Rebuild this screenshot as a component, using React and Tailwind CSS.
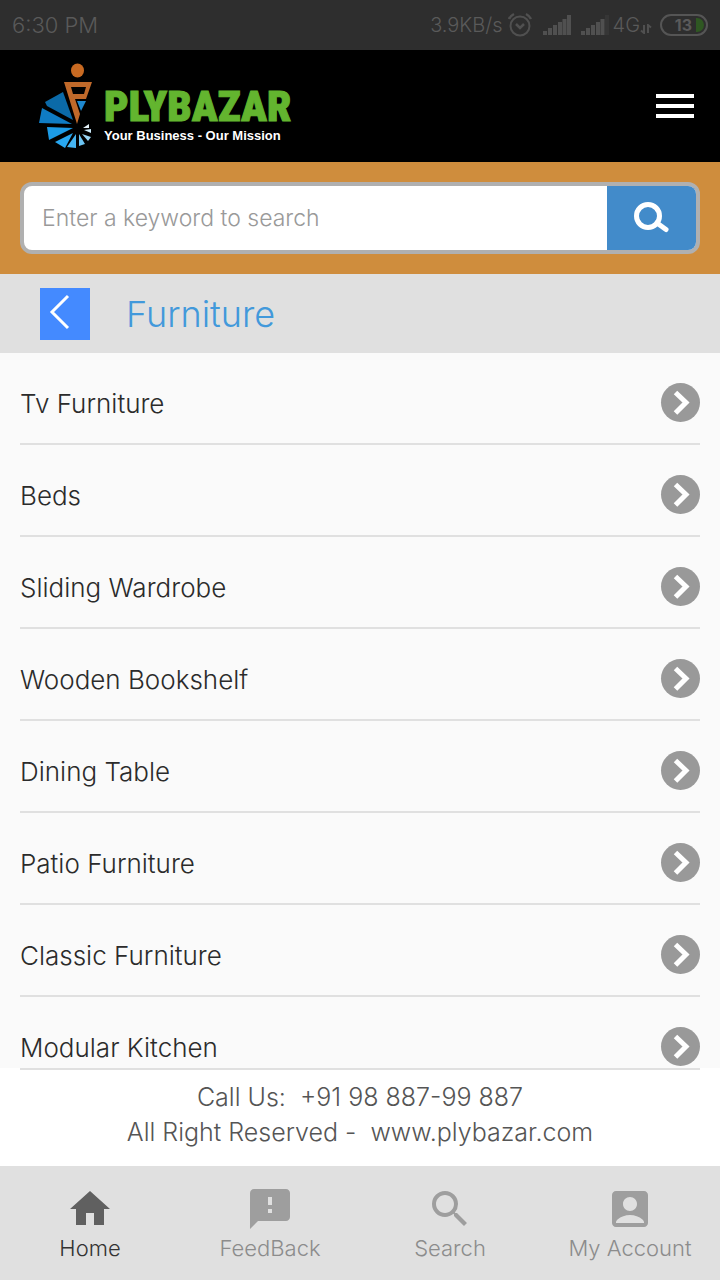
import React, { useState } from 'react';
import { MdHome, MdFeedback, MdSearch, MdAccountBox } from 'react-icons/md';

const categories = [
  'Tv Furniture',
  'Beds',
  'Sliding Wardrobe',
  'Wooden Bookshelf',
  'Dining Table',
  'Patio Furniture',
  'Classic Furniture',
  'Modular Kitchen',
];

const tabs = [
  { label: 'Home', icon: MdHome },
  { label: 'FeedBack', icon: MdFeedback },
  { label: 'Search', icon: MdSearch },
  { label: 'My Account', icon: MdAccountBox },
];

const Signal = ({ weakLast }) => (
  <svg width="28" height="20" viewBox="0 0 28 20" fill="#505050" aria-hidden="true">
    <rect x="0" y="16" width="4" height="4" />
    <rect x="5" y="13" width="4" height="7" />
    <rect x="10" y="10" width="4" height="10" />
    <rect x="15" y="7" width="4" height="13" />
    <rect x="19.500" y="4" width="4" height="16" />
    <rect x="24" y="0" width="4" height="20" opacity={weakLast ? 0.25 : 1} />
  </svg>
);

const StatusBar = () => (
  <div className="flex h-[50px] shrink-0 items-center justify-between bg-[#2e2e2e] px-3 text-[22px] font-light text-[#5a5a5a]">
    <span>6:30 PM</span>
    <div className="flex items-center">
      <span className="mr-1 text-xl">3.9KB/s</span>
      <svg className="mr-2.5" width="26" height="26" viewBox="0 0 26 26" fill="none" stroke="#505050" strokeWidth="2" aria-hidden="true">
        <circle cx="13" cy="14" r="9.5" />
        <path d="M9 12l4 4 4-4" strokeWidth="2.5" />
        <path d="M2 7c1-2.500 3-4 5-5M24 7c-1-2.500-3-4-5-5" strokeWidth="2.500" />
      </svg>
      <Signal />
      <span className="w-2.5" />
      <Signal weakLast />
      <span className="ml-1 text-xl">4G</span>
      <svg className="mt-2 mr-2" width="12" height="10" viewBox="0 0 12 10" fill="none" stroke="#505050" strokeWidth="2" aria-hidden="true">
        <path d="M4 1v8L1 6.500M8 9V1l3 2.500" />
      </svg>
      <div className="flex h-[22px] w-12 items-center justify-end overflow-hidden rounded-full border-2 border-[#555] text-base font-bold">
        <span className="mr-1">13</span>
        <span className="mr-0.5 h-3.5 w-2 rounded-r-full bg-[#2f5722]" />
      </div>
    </div>
  </div>
);

const LogoMark = () => (
  <svg width="56" height="90" viewBox="0 0 56 90" aria-hidden="true">
    <ellipse cx="38.500" cy="9.500" rx="6.500" ry="7" fill="#c86a22" />
    <path fillRule="evenodd" fill="#c0692a" d="M25 21h28L47 38H36l5 15-3 10zM32 26l2 7h11l2-7z" />
    <path d="M38 40h9l-5 10z" fill="#1e88cf" />
    <path d="M24 31L6 41l2 4 26 14z" fill="#0b6aa8" />
    <path d="M3 47L0 62l33 1z" fill="#0f7cc4" />
    <path d="M8 66l2 13 24-12z" fill="#1c9be6" />
    <path d="M16 81l10 6 8-15z" fill="#28a7f0" />
    <path d="M28 86l9 1V73z" fill="#45b4f2" />
    <path d="M40 73v12l6-2z" fill="#6cc4f3" />
    <path d="M43 73l6 7 3-4z" fill="#9ad6f6" />
    <path d="M45 69l7 3v-4z" fill="#c9e8f8" />
    <path d="M44 67h6v-4z" fill="#e6f3fa" />
  </svg>
);

const Header = () => (
  <header className="flex h-28 shrink-0 items-center justify-between bg-black pr-[26px] pl-[39px]">
    <a href="#home" className="flex items-center">
      <LogoMark />
      <div className="ml-[9px] flex flex-col font-bold">
        <span className="mt-4 font-['Noto_Sans_ExtraCondensed','Noto_Sans_Condensed','Roboto_Condensed','Liberation_Sans',sans-serif] text-[43px] leading-[44px] font-black text-[#63b52f] [-webkit-text-stroke:1px_#63b52f]">PLYBAZAR</span>
        <span className="font-['Liberation_Sans',Arial,sans-serif] text-[13px] leading-4 text-white">Your Business - Our Mission</span>
      </div>
    </a>
    <button type="button" aria-label="Menu" className="flex flex-col gap-1.5">
      <span className="h-1 w-[38px] bg-white" />
      <span className="h-1 w-[38px] bg-white" />
      <span className="h-1 w-[38px] bg-white" />
    </button>
  </header>
);

const SearchBar = () => {
  const [keyword, setKeyword] = useState('');

  return (
    <form onSubmit={(e) => e.preventDefault()} className="h-28 shrink-0 bg-[#cf8d3d] p-5">
      <div className="flex h-full overflow-hidden rounded-xl border-4 border-[#b0b0b0] bg-white">
        <input
          type="text"
          aria-label="Keyword"
          value={keyword}
          onChange={(e) => setKeyword(e.target.value)}
          placeholder="Enter a keyword to search"
          className="min-w-0 flex-1 px-[18px] text-[23px] font-light text-[#333] outline-none placeholder:text-[#999]"
        />
        <button type="submit" aria-label="Search" className="flex w-[89px] items-center justify-center bg-[#428bca]">
          <svg width="36" height="32" viewBox="0 0 36 32" fill="none" stroke="#fff" aria-hidden="true">
            <circle cx="14" cy="14" r="11.500" strokeWidth="5" />
            <path d="M23 21l9 6.500" strokeWidth="5" strokeLinecap="round" />
          </svg>
        </button>
      </div>
    </form>
  );
};

const TitleBar = () => (
  <div className="flex h-[79px] shrink-0 items-center gap-9 bg-[#e0e0e0] px-10">
    <button type="button" aria-label="Back" className="h-[52px] w-[50px] bg-[#448aff]">
      <svg width="50" height="52" viewBox="0 0 50 52" fill="none" stroke="#fff" strokeWidth="3" aria-hidden="true">
        <path d="M28 8L12 24 28 40" />
      </svg>
    </button>
    <h1 className="text-4xl font-light text-[#4299db]">Furniture</h1>
  </div>
);

const CategoryList = () => (
  <ul className="min-h-0 flex-1 overflow-y-auto bg-[#fafafa] px-5 [scrollbar-width:none]">
    {categories.map((name) => (
      <li key={name} className="border-b-2 border-[#e0e0e0]">
        <a href="#category" className="flex h-[90px] items-center justify-between pt-2.5 text-[26px] font-light text-[#2b2b2b]">
          <span>{name}</span>
          <svg width="40" height="40" viewBox="0 0 40 40" fill="none" aria-hidden="true">
            <circle cx="20.500" cy="19.500" r="19.500" fill="#999" />
            <path d="M15.500 9.500L26 19.500l-10.500 10.500" stroke="#fff" strokeWidth="5" />
          </svg>
        </a>
      </li>
    ))}
  </ul>
);

const Footer = () => (
  <footer className="h-[98px] shrink-0 bg-white px-5">
    <div className="border-t-2 border-[#e0e0e0] pt-2.5 text-center text-[25px] leading-[35px] font-light text-[#555]">
      <p>Call Us: &nbsp;+91 98 887-99 887</p>
      <p>All Right Reserved - &nbsp;www.plybazar.com</p>
    </div>
  </footer>
);

const TabBar = () => {
  const [active, setActive] = useState('Home');

  return (
    <nav className="grid h-[114px] shrink-0 grid-cols-4 bg-[#e0e0e0]">
      {tabs.map(({ label, icon: Icon }) => (
        <button
          key={label}
          type="button"
          onClick={() => setActive(label)}
          className={`flex flex-col items-center pt-[19px] text-[22px] leading-[30px] font-light ${active === label ? 'text-[#333]' : 'text-[#8c8c8c]'}`}
        >
          <Icon className={`size-12 ${active === label ? 'text-[#606060]' : 'text-[#9e9e9e]'}`} />
          {label}
        </button>
      ))}
    </nav>
  );
};

const App = () => (
  <div className="flex h-screen flex-col overflow-hidden font-[Inter,'Open_Sans',sans-serif]">
    <StatusBar />
    <Header />
    <SearchBar />
    <TitleBar />
    <CategoryList />
    <Footer />
    <TabBar />
  </div>
);

export default App;
